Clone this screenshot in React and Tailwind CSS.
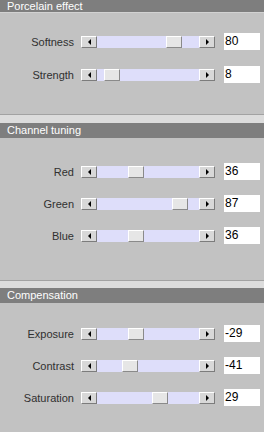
import React from "react";

function Arrow({ dir }) {
  return (
    <div className="box-border w-[16px] h-[12px] flex items-center justify-center bg-[#d8d8d8] border-t border-l border-t-white border-l-white border-b border-r border-b-[#7c7c7c] border-r-[#7c7c7c]">
      {dir === "left" ? (
        <div className="w-0 h-0 border-y-[3px] border-y-transparent border-r-[3px] border-r-black" />
      ) : (
        <div className="w-0 h-0 border-y-[3px] border-y-transparent border-l-[3px] border-l-black" />
      )}
    </div>
  );
}

function Row({ label, value, min, max }) {
  const pos = Math.round(((value - min) / (max - min)) * 86);
  return (
    <div className="flex items-center h-[17px]">
      <div className="w-[74px] text-right text-[11px] leading-[17px] text-[#303030] pt-[1px]">{label}</div>
      <div className="ml-[7px] flex h-[12px] w-[134px]">
        <Arrow dir="left" />
        <div className="flex flex-1 bg-[#dedefa]">
          <div style={{ width: pos }} />
          <div className="box-border w-[16px] h-[12px] bg-[#e6e6e6] border-t border-l border-t-white border-l-white border-b border-r border-b-[#8a8a8a] border-r-[#8a8a8a]" />
        </div>
        <Arrow dir="right" />
      </div>
      <div className="ml-[9px] w-[36px] h-[17px] bg-white text-[12px] leading-[17px] pl-[1px] text-black">{value}</div>
    </div>
  );
}

function Separator({ band }) {
  return (
    <>
      <div className="h-px bg-[#a2a2a2]" />
      <div className={band} />
    </>
  );
}

export default function App() {
  return (
    <div className="w-[264px] h-[432px] overflow-hidden bg-[#c2c2c2] font-['Liberation_Sans',Arial,sans-serif]">
      <div className="h-[12px] leading-[12px] bg-[#7e7e7e] text-white text-[11px] pl-[7px]">Porcelain effect</div>
      <div className="h-px bg-[#d2d2d2]" />
      <div className="flex flex-col gap-[16px] pt-[20px] pb-[31px]">
        <Row label="Softness" value={80} min={0} max={100} />
        <Row label="Strength" value={8} min={0} max={100} />
      </div>
      <Separator band="h-[8px] bg-[#dcdcdc]" />
      <div className="h-[15px] leading-[15px] bg-[#7e7e7e] text-white text-[11px] pl-[7px]">Channel tuning</div>
      <div className="flex flex-col gap-[15px] pt-[25px] pb-[36px]">
        <Row label="Red" value={36} min={0} max={100} />
        <Row label="Green" value={87} min={0} max={100} />
        <Row label="Blue" value={36} min={0} max={100} />
      </div>
      <Separator band="h-[7px] bg-[#dcdcdc]" />
      <div className="h-[15px] leading-[15px] bg-[#7e7e7e] text-white text-[11px] pl-[7px]">Compensation</div>
      <div className="flex flex-col gap-[15px] pt-[22px]">
        <Row label="Exposure" value={-29} min={-100} max={100} />
        <Row label="Contrast" value={-41} min={-100} max={100} />
        <Row label="Saturation" value={29} min={-100} max={100} />
      </div>
    </div>
  );
}
